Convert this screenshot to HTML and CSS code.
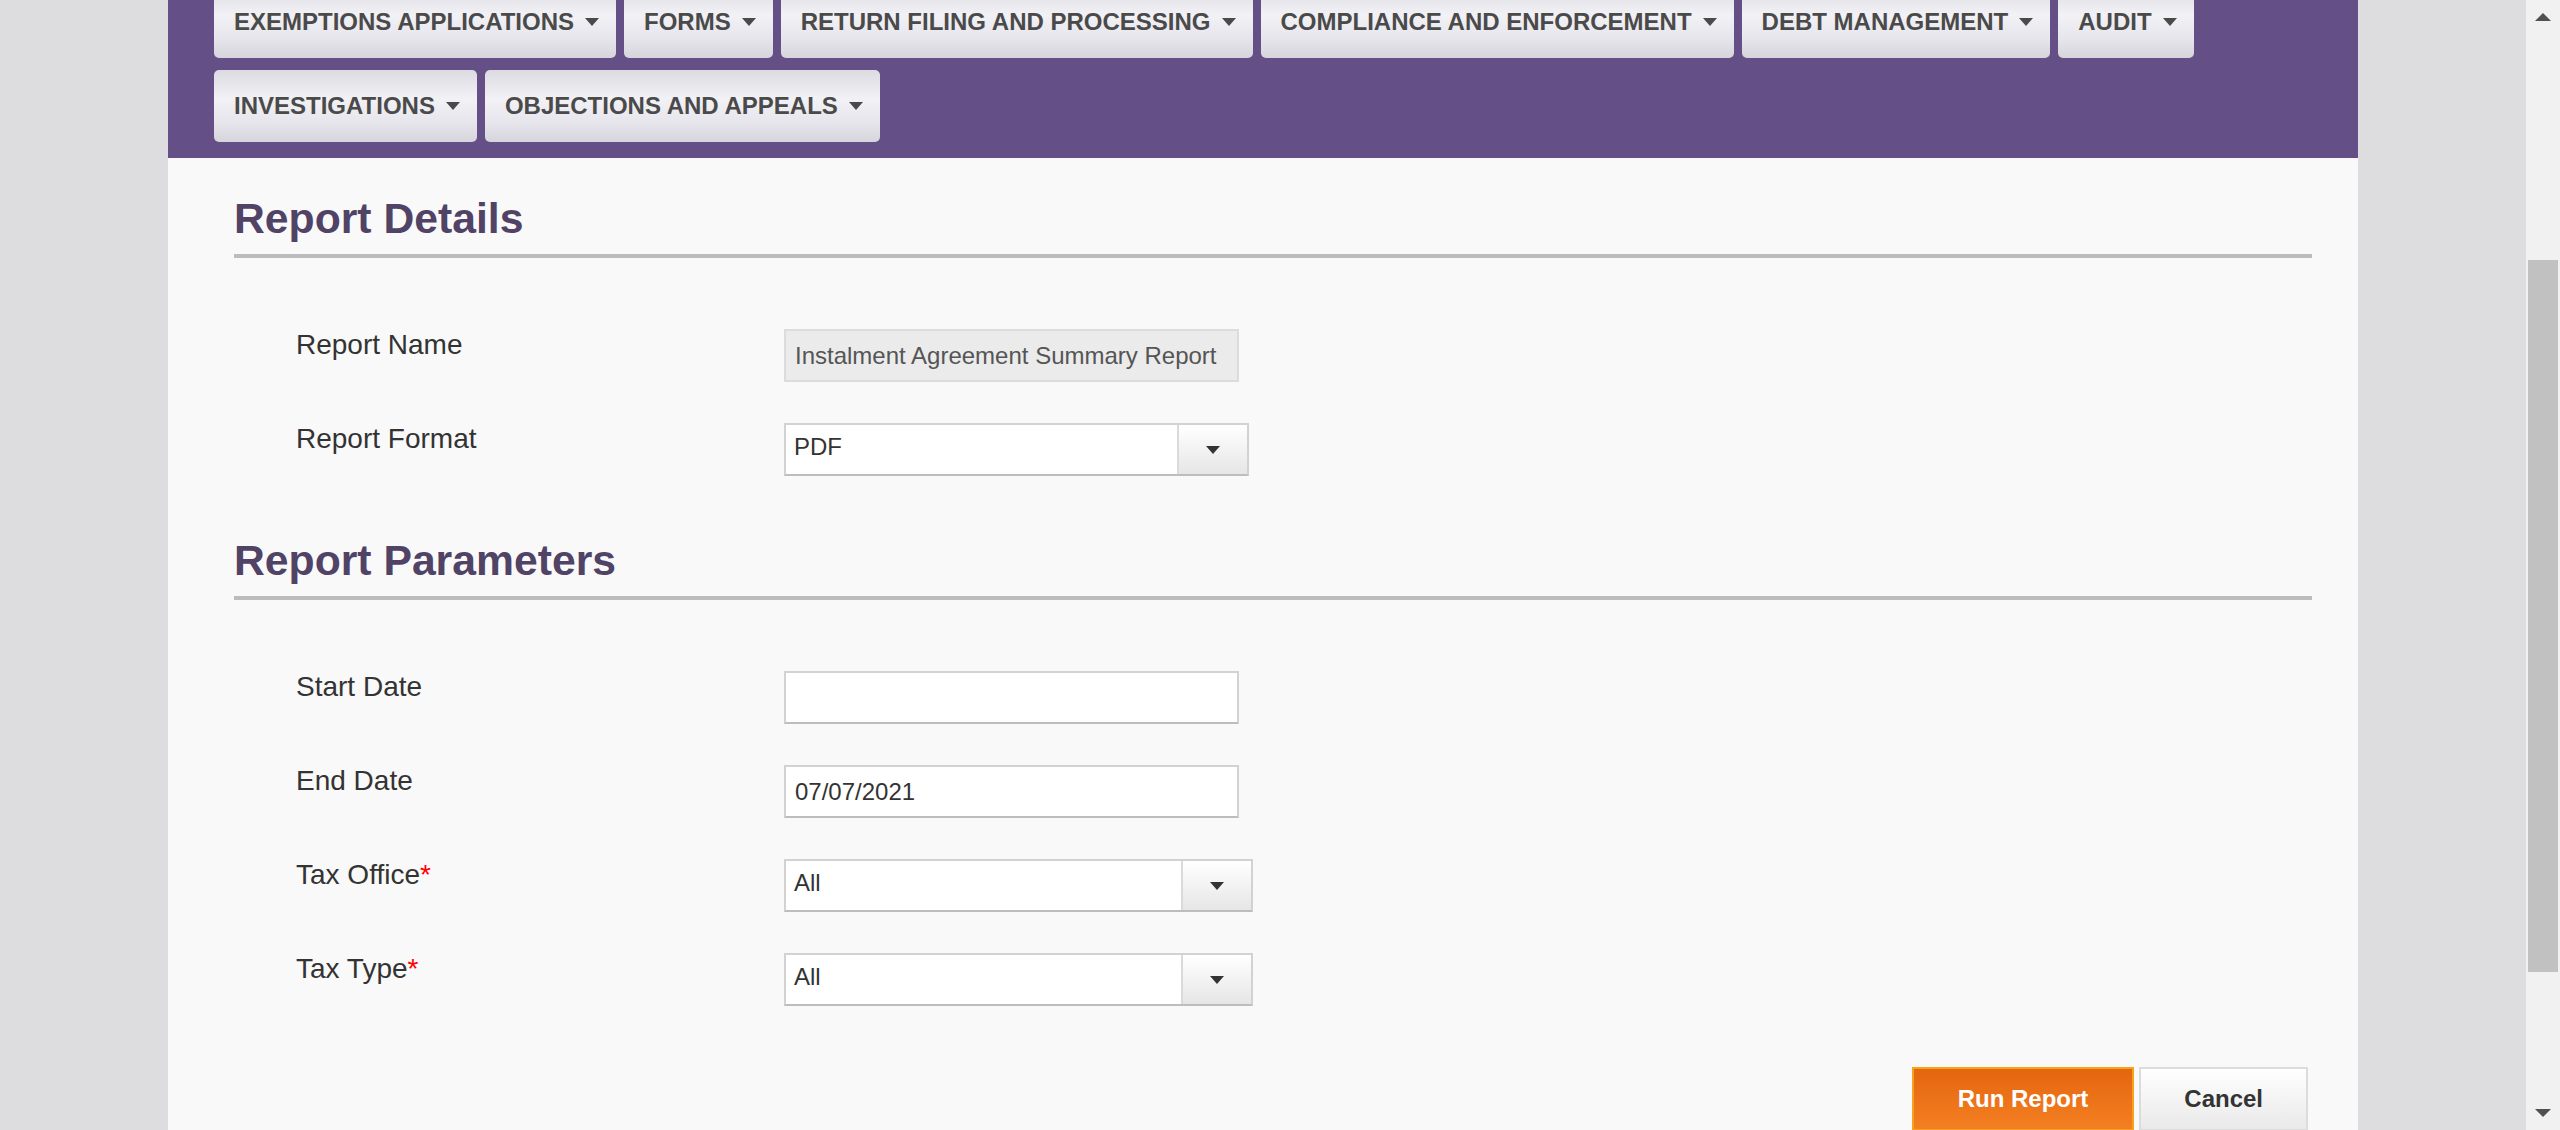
FILE: index.html
```html
<!DOCTYPE html>
<html lang="en">
<head>
<meta charset="utf-8">
<title>Instalment Agreement Summary Report</title>
<link rel="stylesheet" href="styles.css">
</head>
<body>
<div class="viewport">
  <div class="page">
    <nav class="mainnav">
      <a class="navbtn">EXEMPTIONS APPLICATIONS<span class="caret"></span></a>
      <a class="navbtn">FORMS<span class="caret"></span></a>
      <a class="navbtn">RETURN FILING AND PROCESSING<span class="caret"></span></a>
      <a class="navbtn">COMPLIANCE AND ENFORCEMENT<span class="caret"></span></a>
      <a class="navbtn">DEBT MANAGEMENT<span class="caret"></span></a>
      <a class="navbtn">AUDIT<span class="caret"></span></a>
      <a class="navbtn">INVESTIGATIONS<span class="caret"></span></a>
      <a class="navbtn">OBJECTIONS AND APPEALS<span class="caret"></span></a>
    </nav>
    <main class="content">
      <section class="panel">
        <h2 class="panel-title">Report Details</h2>
        <div class="form-rows">
          <div class="form-row">
            <label class="field-label">Report Name</label>
            <div class="field input readonly">Instalment Agreement Summary Report</div>
          </div>
          <div class="form-row">
            <label class="field-label">Report Format</label>
            <div class="field select select-narrow">
              <span class="select-value">PDF</span>
              <span class="select-btn"><span class="tri-down"></span></span>
            </div>
          </div>
        </div>
      </section>
      <section class="panel panel-next">
        <h2 class="panel-title">Report Parameters</h2>
        <div class="form-rows">
          <div class="form-row">
            <label class="field-label">Start Date</label>
            <div class="field input"></div>
          </div>
          <div class="form-row">
            <label class="field-label">End Date</label>
            <div class="field input">07/07/2021</div>
          </div>
          <div class="form-row">
            <label class="field-label">Tax Office<span class="req">*</span></label>
            <div class="field select">
              <span class="select-value">All</span>
              <span class="select-btn"><span class="tri-down"></span></span>
            </div>
          </div>
          <div class="form-row">
            <label class="field-label">Tax Type<span class="req">*</span></label>
            <div class="field select">
              <span class="select-value">All</span>
              <span class="select-btn"><span class="tri-down"></span></span>
            </div>
          </div>
        </div>
      </section>
      <div class="actions">
        <button class="btn btn-primary">Run Report</button>
        <button class="btn btn-default">Cancel</button>
      </div>
    </main>
  </div>
</div>
<div class="scrollbar">
  <div class="sb-btn"><span class="sb-up"></span></div>
  <div class="sb-thumb"></div>
  <div class="sb-btn sb-bottom"><span class="sb-down"></span></div>
</div>
</body>
</html>
```

FILE: styles.css
```css
html, body {
  margin: 0;
  padding: 0;
  height: 1130px;
  overflow: hidden;
}
body {
  display: flex;
  background: #dddde0;
  font-family: "Liberation Sans", Arial, sans-serif;
  color: #333;
}
.viewport {
  flex: 1;
  display: flex;
  justify-content: center;
  overflow: hidden;
}
.page {
  width: 2190px;
  margin-top: -14px;
  background: #f9f9f9;
  align-self: flex-start;
  min-height: 1200px;
}

/* nav */
.mainnav {
  background: #644f86;
  display: flex;
  flex-wrap: wrap;
  gap: 12px 8px;
  padding: 0 46px 16px 46px;
}
.navbtn {
  height: 72px;
  box-sizing: border-box;
  display: flex;
  align-items: center;
  padding: 0 17px 0 20px;
  border-radius: 5px;
  background: linear-gradient(to bottom, #dcdbe1 0%, #f2f1f6 40%, #e7e6ec 72%, #d6d5db 100%);
  color: #4a4a4a;
  font-weight: bold;
  font-size: 24px;
  white-space: nowrap;
}
.caret {
  display: inline-block;
  margin-left: 11px;
  width: 0;
  height: 0;
  border-left: 7px solid transparent;
  border-right: 7px solid transparent;
  border-top: 8px solid #4a4a4a;
}

/* content */
.content {
  padding: 37px 46px 0 66px;
}
.panel-next {
  margin-top: 61px;
}
.panel-title {
  margin: 0;
  font-size: 42.7px;
  line-height: 46px;
  font-weight: bold;
  color: #504366;
  padding-bottom: 13px;
  border-bottom: 4px solid #c6c6c6;
  border-image: linear-gradient(to bottom, #dcdcdc 50%, #bcbcbc 50%) 1;
}
.form-rows {
  margin-top: 71px;
  padding-left: 62px;
  display: flex;
  flex-direction: column;
  gap: 41px;
}
.form-row {
  display: flex;
  align-items: flex-start;
}
.field-label {
  width: 488px;
  font-size: 28px;
  line-height: 32px;
  color: #333;
}
.req {
  color: #ff0000;
}
.field {
  height: 53px;
  box-sizing: border-box;
  border: 2px solid #d2d2d2;
  border-bottom-color: #bdbdbd;
  font-size: 24px;
  display: flex;
  align-items: center;
  background: #fff;
  color: #333;
}
.input {
  width: 455px;
  padding: 0 9px;
}
.input.readonly {
  background: #ebebeb;
  border-color: #dcdcdc;
  color: #555;
}
.select {
  width: 469px;
}
.select-narrow {
  width: 465px;
}
.select-value {
  flex: 1;
  padding: 0 9px 5px 8px;
}
.select-btn {
  width: 70px;
  align-self: stretch;
  box-sizing: border-box;
  border-left: 2px solid #dadada;
  background: linear-gradient(to bottom, #ffffff, #e6e6e6);
  display: flex;
  align-items: center;
  justify-content: center;
}
.tri-down {
  width: 0;
  height: 0;
  border-left: 7px solid transparent;
  border-right: 7px solid transparent;
  border-top: 8px solid #333;
}

/* actions */
.actions {
  margin-top: 61px;
  margin-right: 4px;
  display: flex;
  justify-content: flex-end;
  gap: 5px;
}
.btn {
  height: 64px;
  padding: 0 44px;
  font-family: "Liberation Sans", Arial, sans-serif;
  font-size: 24px;
  font-weight: bold;
  border: 2px solid;
  border-radius: 0;
}
.btn-primary {
  color: #fff;
  border-color: #f8a21c;
  background: linear-gradient(to bottom, #e4660f, #f47f22);
}
.btn-default {
  padding: 0 43px;
  color: #333;
  border-color: #dcdcdc;
  background: linear-gradient(to bottom, #ffffff, #e9e9e9);
}

/* scrollbar */
.scrollbar {
  width: 34px;
  height: 1130px;
  background: #f1f1f1;
  display: flex;
  flex-direction: column;
}
.sb-btn {
  height: 34px;
  display: flex;
  align-items: center;
  justify-content: center;
}
.sb-up {
  width: 0;
  height: 0;
  border-left: 8px solid transparent;
  border-right: 8px solid transparent;
  border-bottom: 8px solid #505050;
}
.sb-down {
  width: 0;
  height: 0;
  border-left: 8px solid transparent;
  border-right: 8px solid transparent;
  border-top: 8px solid #505050;
}
.sb-thumb {
  margin: 226px 2px 0 2px;
  height: 712px;
  background: #c1c1c1;
}
.sb-bottom {
  margin-top: auto;
}
```
